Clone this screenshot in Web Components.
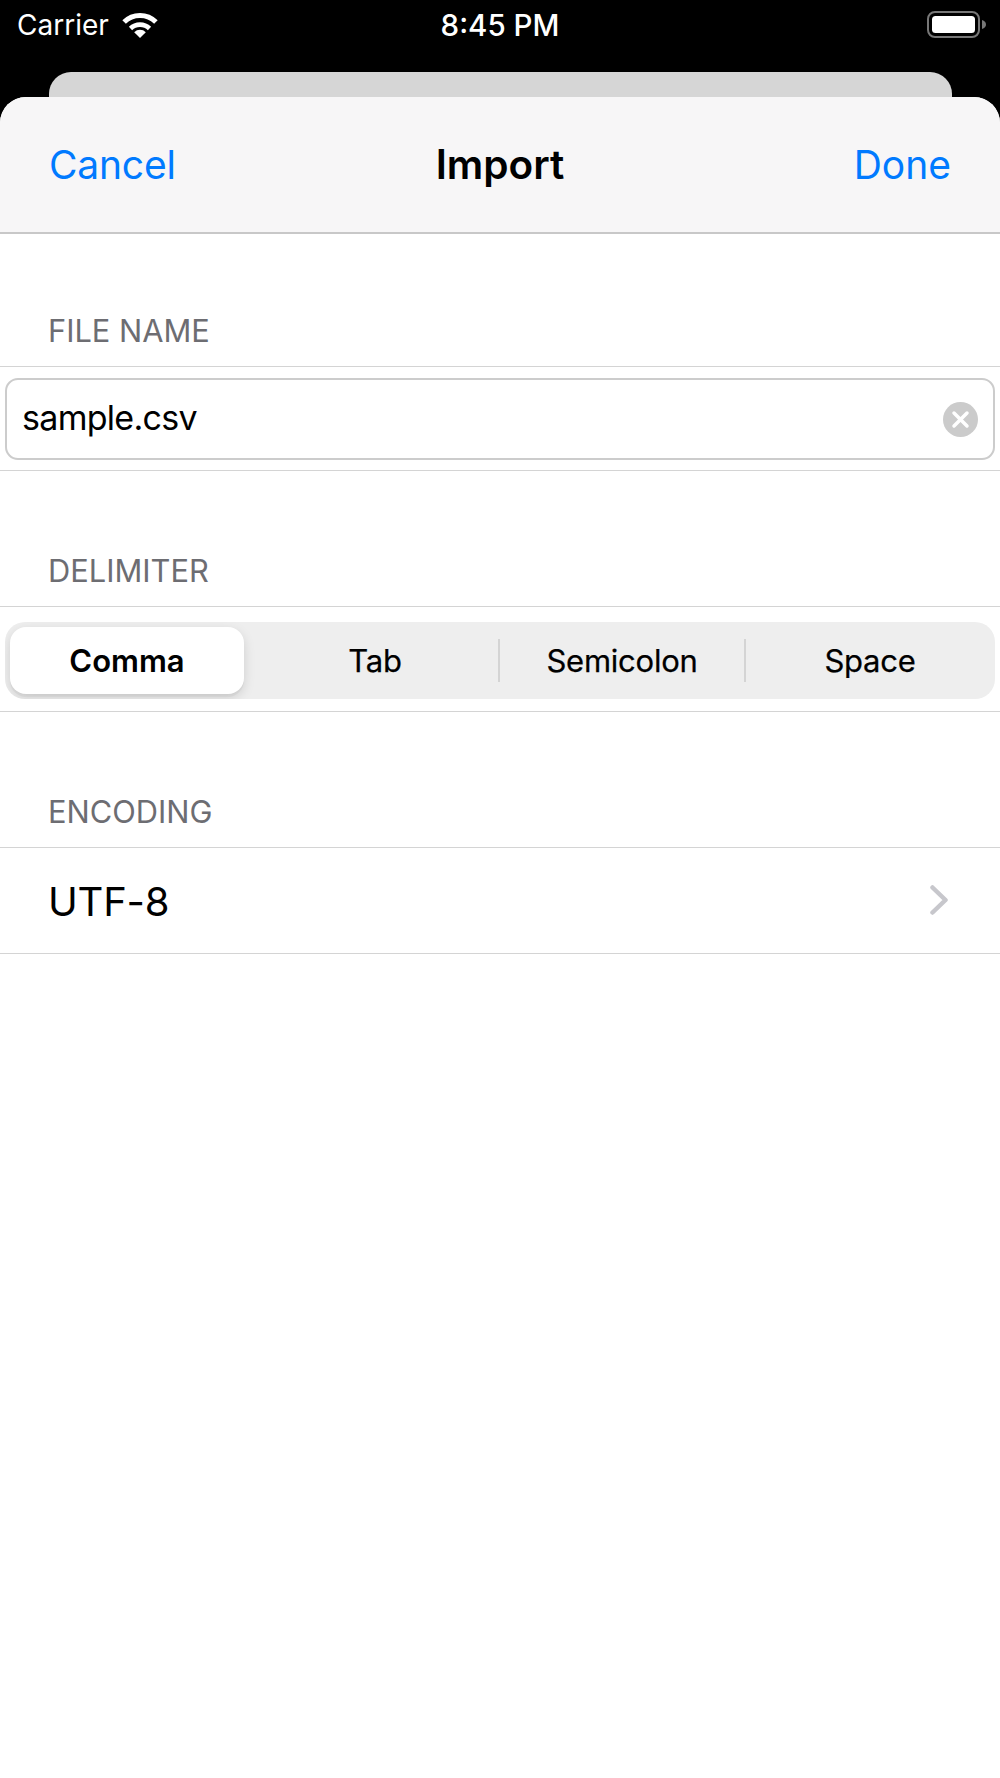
<!DOCTYPE html>
<html lang="en">
<head>
<meta charset="utf-8">
<title>Import</title>
<style>
  html, body { margin: 0; height: 100%; background: #000; }
  body { font-family: Inter, "Liberation Sans", sans-serif; }
</style>
</head>
<body>
<ios-screen>
  <ios-status-bar slot="status" carrier="Carrier" time="8:45 PM"></ios-status-bar>
  <ios-nav-bar title="Import" cancel="Cancel" done="Done"></ios-nav-bar>
  <ios-section title="FILE NAME" top="132">
    <ios-text-field value="sample.csv"></ios-text-field>
  </ios-section>
  <ios-section title="DELIMITER">
    <ios-segmented items="Comma,Tab,Semicolon,Space" selected="0"></ios-segmented>
  </ios-section>
  <ios-section title="ENCODING">
    <ios-disclosure-row label="UTF-8"></ios-disclosure-row>
  </ios-section>
</ios-screen>

<script>
class IosScreen extends HTMLElement {
  constructor() {
    super();
    this.attachShadow({ mode: "open" }).innerHTML = `
      <style>
        :host { display: flex; flex-direction: column; width: 1000px; height: 1778px; background: #000; overflow: hidden; }
        .peek { height: 25px; margin: 0 48px 0 49px; flex: none; background: #d6d6d6; border-radius: 22px 22px 0 0; }
        .sheet { flex: 1; background: #fff; border-radius: 26px 26px 0 0; overflow: hidden; }
      </style>
      <slot name="status"></slot>
      <div class="peek"></div>
      <div class="sheet"><slot></slot></div>
    `;
  }
}
customElements.define("ios-screen", IosScreen);

class IosStatusBar extends HTMLElement {
  connectedCallback() {
    this.attachShadow({ mode: "open" }).innerHTML = `
      <style>
        :host { display: grid; grid-template-columns: 1fr auto 1fr; align-items: start; height: 72px; padding: 0 13px; box-sizing: border-box; color: #fff; flex: none; }
        .row { display: flex; align-items: center; height: 50px; }
        .carrier { font-size: 28px; margin-left: 4px; }
        .time { font-size: 29.500px; font-weight: 500; height: 50px; line-height: 50px; }
        .wifi { margin-left: 12px; margin-top: -1px; }
        .right { justify-content: flex-end; }
      </style>
      <div class="row">
        <span class="carrier">${this.getAttribute("carrier")}</span>
        <svg class="wifi" width="38" height="26" viewBox="0 0 38 26">
          <path d="M3.1 10.1a22.5 22.5 0 0 1 31.8 0" fill="none" stroke="#fff" stroke-width="5"/>
          <path d="M9.5 16.5a13.5 13.5 0 0 1 19 0" fill="none" stroke="#fff" stroke-width="4.6"/>
          <path d="M13.2 20.2a8.2 8.2 0 0 1 11.6 0L19 26z" fill="#fff"/>
        </svg>
      </div>
      <div class="time">${this.getAttribute("time")}</div>
      <div class="row right">
        <svg width="60" height="28" viewBox="0 0 60 28">
          <rect x="1" y="1" width="51" height="25" rx="7" fill="none" stroke="#777" stroke-width="2"/>
          <rect x="5" y="5" width="43" height="17" rx="3.5" fill="#fff"/>
          <path d="M55 9c2.5.6 4 2.4 4 4.5S57.500 17.400 55 18z" fill="#777"/>
        </svg>
      </div>
    `;
  }
}
customElements.define("ios-status-bar", IosStatusBar);

class IosNavBar extends HTMLElement {
  connectedCallback() {
    this.attachShadow({ mode: "open" }).innerHTML = `
      <style>
        :host { display: grid; grid-template-columns: 1fr auto 1fr; align-items: center; height: 137px; padding: 0 49px; box-sizing: border-box; background: #f7f6f7; border-bottom: 2px solid #c8c8c8; font-size: 39px; }
        .btn { color: #007aff; letter-spacing: -0.2px; }
        .done { text-align: right; letter-spacing: 0; }
        .title { font-size: 40.500px; font-weight: 600; color: #000; }
      </style>
      <span class="btn">${this.getAttribute("cancel")}</span>
      <span class="title">${this.getAttribute("title")}</span>
      <span class="btn done">${this.getAttribute("done")}</span>
    `;
  }
}
customElements.define("ios-nav-bar", IosNavBar);

class IosSection extends HTMLElement {
  connectedCallback() {
    const top = this.getAttribute("top") || 135;
    this.attachShadow({ mode: "open" }).innerHTML = `
      <style>
        :host { display: block; border-bottom: 1px solid #d4d4d4; }
        .head { display: flex; align-items: flex-end; height: ${top}px; box-sizing: border-box; padding: 0 48px 17px; font-size: 30.800px; color: #6d6d72; line-height: 36px; }
        .body { border-top: 1px solid #d4d4d4; }
      </style>
      <div class="head">${this.getAttribute("title")}</div>
      <div class="body"><slot></slot></div>
    `;
  }
}
customElements.define("ios-section", IosSection);

class IosTextField extends HTMLElement {
  connectedCallback() {
    this.attachShadow({ mode: "open" }).innerHTML = `
      <style>
        :host { display: flex; align-items: center; justify-content: space-between; height: 82px; margin: 11px 5px 10px 5px; padding: 0 15px; box-sizing: border-box; border: 2px solid #cccccc; border-radius: 13px; font-size: 34px; letter-spacing: -0.7px; color: #000; }
        span { margin-bottom: 4px; }
        svg { flex: none; }
      </style>
      <span>${this.getAttribute("value")}</span>
      <svg width="35" height="35" viewBox="0 0 35 35">
        <circle cx="17.500" cy="17.500" r="17.500" fill="#cbcbcb"/>
        <path d="M11 11l13 13M24 11l-13 13" stroke="#fff" stroke-width="3.500" stroke-linecap="round"/>
      </svg>
    `;
  }
}
customElements.define("ios-text-field", IosTextField);

class IosSegmented extends HTMLElement {
  connectedCallback() {
    const items = this.getAttribute("items").split(",");
    const selected = Number(this.getAttribute("selected"));
    this.attachShadow({ mode: "open" }).innerHTML = `
      <style>
        :host { display: grid; grid-template-columns: 246px 248px 246px 250px; height: 77px; margin: 15px 5px 12px; background: #eeeeee; border-radius: 20px; font-size: 31px; color: #000; overflow: hidden; }
        .seg { position: relative; display: flex; align-items: center; justify-content: center; font-weight: 400; letter-spacing: -0.25px; -webkit-text-stroke: 0.25px #000; }
        .seg + .seg::before { content: ""; position: absolute; left: -1px; top: 17px; bottom: 17px; width: 2px; background: #d4d4d4; }
        .seg.on { font-weight: 600; letter-spacing: 0; -webkit-text-stroke: 0; background: #fff; margin: 5px 7px 5px 5px; border-radius: 16px; box-shadow: 0 4px 12px rgba(0, 0, 0, 0.13), 0 3px 1px rgba(0, 0, 0, 0.04); z-index: 1; }
        .seg.on + .seg::before { display: none; }
      </style>
      ${items.map((label, i) => `<div class="seg${i === selected ? " on" : ""}">${label}</div>`).join("")}
    `;
  }
}
customElements.define("ios-segmented", IosSegmented);

class IosDisclosureRow extends HTMLElement {
  connectedCallback() {
    this.attachShadow({ mode: "open" }).innerHTML = `
      <style>
        :host { display: flex; align-items: center; justify-content: space-between; height: 105px; padding: 0 52px 0 48px; box-sizing: border-box; font-size: 40px; letter-spacing: -0.2px; color: #000; }
        span { margin-top: 2px; }
        svg { margin-bottom: 2px; }
      </style>
      <span>${this.getAttribute("label")}</span>
      <svg width="18" height="30" viewBox="0 0 18 30">
        <path d="M2.500 2.500L15.500 15L2.500 27.500" fill="none" stroke="#c7c7cc" stroke-width="4.500" stroke-linecap="round" stroke-linejoin="round"/>
      </svg>
    `;
  }
}
customElements.define("ios-disclosure-row", IosDisclosureRow);
</script>
</body>
</html>
